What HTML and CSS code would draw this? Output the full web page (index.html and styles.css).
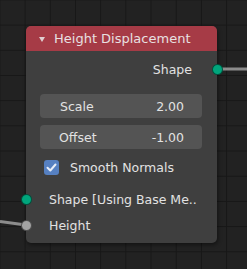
FILE: index.html
```html
<!DOCTYPE html>
<html>
<head>
<meta charset="utf-8">
<link rel="stylesheet" href="styles.css">
</head>
<body>
<div class="canvas">
  <svg class="wires" width="247" height="269" viewBox="0 0 247 269">
    <path d="M217 69 L247 69" stroke="#8c8c8c" stroke-width="3" fill="none"/>
    <path d="M0 221.5 L26 225" stroke="#8c8c8c" stroke-width="3" fill="none"/>
  </svg>
  <div class="node">
    <div class="header">
      <span class="tri"></span>
      <span class="title">Height Displacement</span>
    </div>
    <div class="body">
      <div class="row out">
        <span>Shape</span>
        <span class="socket green right"></span>
      </div>
      <div class="field f1"><span>Scale</span><span>2.00</span></div>
      <div class="field f2"><span>Offset</span><span>-1.00</span></div>
      <div class="row check">
        <span class="box">
          <svg width="15" height="15" viewBox="0 0 15 15"><path d="M3.5 7.8 L6.3 10.5 L11.5 4.5" stroke="#e8eef8" stroke-width="2" fill="none" stroke-linecap="round" stroke-linejoin="round"/></svg>
        </span>
        <span>Smooth Normals</span>
      </div>
      <div class="row in in1">
        <span class="socket green left"></span>
        <span>Shape [Using Base Me..</span>
      </div>
      <div class="row in in2">
        <span class="socket grey left"></span>
        <span>Height</span>
      </div>
    </div>
  </div>
</div>
</body>
</html>
```
FILE: styles.css
```css
html, body {
  margin: 0;
  padding: 0;
}
body {
  width: 247px;
  height: 269px;
  overflow: hidden;
  font-family: "DejaVu Sans", sans-serif;
}
.canvas {
  position: relative;
  width: 247px;
  height: 269px;
  background-color: #222222;
  background-image:
    linear-gradient(to right, #171717 1.2px, transparent 1.2px),
    linear-gradient(to bottom, #171717 1.2px, transparent 1.2px);
  background-size: 25.2px 25.2px;
  background-position: -0.6px -0.6px;
}
.wires {
  position: absolute;
  left: 0;
  top: 0;
}
.node {
  position: absolute;
  left: 26px;
  top: 26px;
  width: 191px;
  height: 217px;
  background: #3f3f3f;
  border-radius: 5px;
  box-shadow: 1px 2px 4px rgba(0,0,0,0.45);
  color: #e2e2e2;
  font-size: 12.5px;
}
.header {
  height: 25px;
  background: #a63b46;
  border-radius: 5px 5px 0 0;
  display: flex;
  align-items: center;
  padding-left: 13px;
  box-sizing: border-box;
  color: #e8e0e1;
}
.tri {
  width: 0;
  height: 0;
  border-left: 3.5px solid transparent;
  border-right: 3.5px solid transparent;
  border-top: 5px solid #e0cfd1;
  margin-right: 9px;
  margin-top: 1px;
}
.title {
  font-size: 13px;
}
.body {
  position: relative;
  display: flex;
  flex-direction: column;
  padding-top: 7px;
}
.row {
  position: relative;
  height: 22px;
  display: flex;
  align-items: center;
}
.out {
  justify-content: flex-end;
  padding-right: 25px;
}
.field {
  height: 24px;
  margin: 0 15px 0 14px;
  background: #545454;
  border-radius: 4px;
  display: flex;
  align-items: center;
  justify-content: space-between;
  padding: 0 18px 0 20px;
  box-sizing: border-box;
}
.f1 { margin-top: 14px; }
.f2 { margin-top: 7px; }
.f2 { padding-left: 19px; }
.check {
  margin-top: 7px;
  padding-left: 18px;
}
.box {
  width: 15px;
  height: 15px;
  background: #5680c1;
  border-radius: 3px;
  margin-right: 11px;
  display: flex;
}
.in {
  padding-left: 23px;
}
.in1 { margin-top: 10px; }
.in2 { margin-top: 4px; }
.socket {
  position: absolute;
  width: 11px;
  height: 11px;
  border-radius: 50%;
  top: 50%;
  margin-top: -5.5px;
  box-sizing: border-box;
  border: 1px solid rgba(0,0,0,0.5);
}
.socket.right { right: -5.5px; }
.socket.left { left: -5.5px; }
.green { background: #00a57c; }
.grey { background: #a3a3a3; }
```
